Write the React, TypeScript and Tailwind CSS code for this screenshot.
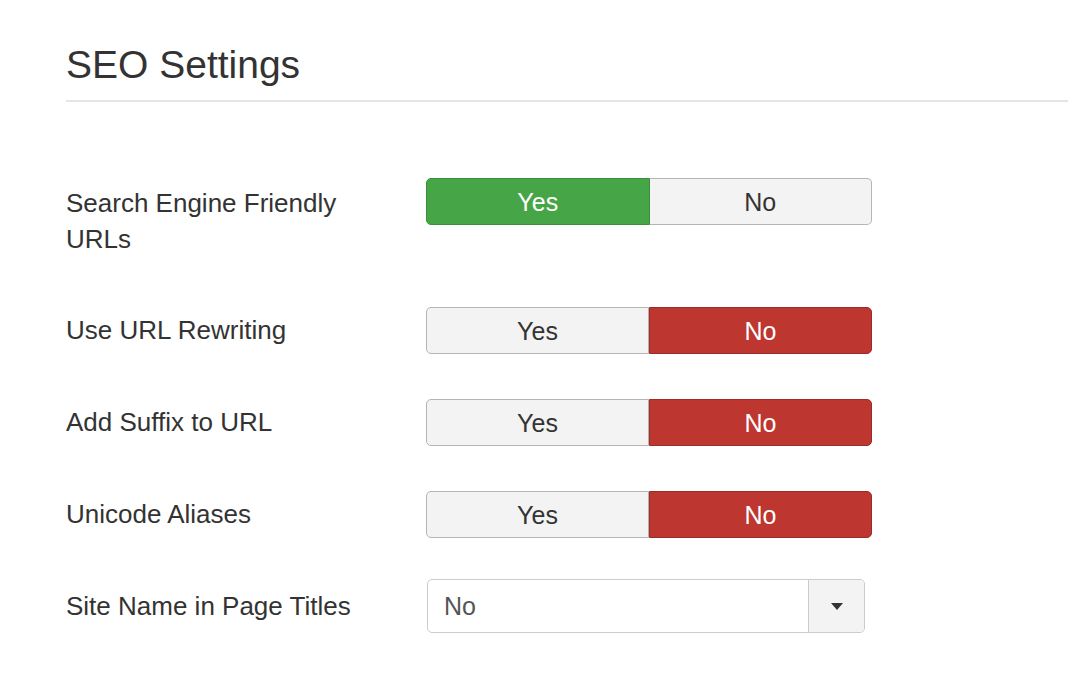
import React from "react";

type Row = { label: string; value: "yes" | "no" };

const rows: Row[] = [
  { label: "Search Engine Friendly URLs", value: "yes" },
  { label: "Use URL Rewriting", value: "no" },
  { label: "Add Suffix to URL", value: "no" },
  { label: "Unicode Aliases", value: "no" },
];

function Toggle({ value }: { value: "yes" | "no" }) {
  const yesActive = value === "yes";
  return (
    <div className="flex h-[47px] w-[446px] text-[25px]">
      <div
        className={
          yesActive
            ? "flex-1 flex items-center justify-center pt-[2px] rounded-l-[5px] border border-[#3b8f3b] bg-[#46a546] text-white"
            : "flex-1 flex items-center justify-center pt-[2px] rounded-l-[5px] border border-[#b5b5b5] bg-[#f3f3f3] text-[#333]"
        }
      >
        Yes
      </div>
      <div
        className={
          !yesActive
            ? "flex-1 flex items-center justify-center pt-[2px] rounded-r-[5px] border border-[#9c2c27] bg-[#bd3630] text-white"
            : "flex-1 flex items-center justify-center pt-[2px] rounded-r-[5px] border border-l-0 border-[#b5b5b5] bg-[#f3f3f3] text-[#333]"
        }
      >
        No
      </div>
    </div>
  );
}

export default function App() {
  return (
    <div
      className="min-h-[682px] w-full bg-white pl-[66px] pt-[42px] text-[#333]"
      style={{ fontFamily: '"Liberation Sans", Arial, Helvetica, sans-serif' }}
    >
      <h1 className="border-b-2 border-[#e5e5e5] pb-[12px] text-[39px] font-normal leading-[46px] text-[#333]">
        SEO Settings
      </h1>
      <div className="mt-[76px] flex flex-col gap-[45px] text-[26px]">
        {rows.map((r, i) => (
          <div key={r.label} className="flex items-start">
            <div
              className={
                i === 0
                  ? "w-[300px] pt-[7px] pb-[5px] leading-[36px]"
                  : "w-[300px] pt-[6px] leading-[35px]"
              }
            >
              {r.label}
            </div>
            <div className="ml-[60px]">
              <Toggle value={r.value} />
            </div>
          </div>
        ))}
        <div className="flex items-start -mt-[4px]">
          <div className="w-[300px] pt-[10px] leading-[35px]">Site Name in Page Titles</div>
          <div className="ml-[61px] flex h-[54px] w-[438px] rounded-[5px] border border-[#cccccc] bg-white text-[25px]">
            <div className="flex flex-1 items-center pl-[16px] pt-[2px] text-[#555]">No</div>
            <div className="flex w-[56px] items-center justify-center rounded-r-[5px] border-l border-[#cccccc] bg-[#f3f3f3]">
              <svg width="12" height="7" viewBox="0 0 12 7">
                <path d="M0 0 L12 0 L6 7 Z" fill="#333" />
              </svg>
            </div>
          </div>
        </div>
      </div>
    </div>
  );
}
